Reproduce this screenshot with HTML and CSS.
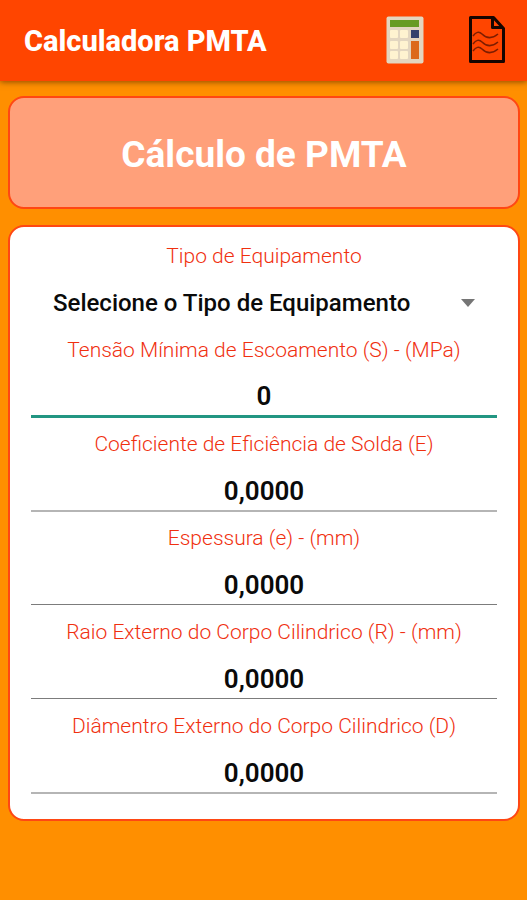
FILE: index.html
```html
<!DOCTYPE html>
<html lang="pt-BR">
<head>
<meta charset="utf-8">
<meta name="viewport" content="width=device-width, initial-scale=1">
<title>Calculadora PMTA</title>
<link rel="stylesheet" href="styles.css">
</head>
<body>
<header class="bar">
  <h1 class="bar-title">Calculadora PMTA</h1>
  <div class="actions">
    <button class="action" type="button" aria-label="Calcular">
      <svg width="38" height="48" viewBox="0 0 38 48">
        <rect x="0.5" y="0.5" width="37" height="47" rx="2" fill="#e3d6c0"/>
        <rect x="4" y="4" width="29" height="7" fill="#679b24"/>
        <g fill="#fff3d0">
          <rect x="4" y="14" width="8" height="8" rx="1"/><rect x="14" y="14" width="8" height="8" rx="1"/>
          <rect x="4" y="25" width="8" height="8" rx="1"/><rect x="14" y="25" width="8" height="8" rx="1"/>
          <rect x="4" y="35" width="8" height="8" rx="1"/><rect x="14" y="35" width="8" height="8" rx="1"/>
        </g>
        <rect x="25" y="14" width="8" height="8" fill="#34416c"/>
        <rect x="25" y="25" width="8" height="18" fill="#dc6a1c"/>
      </svg>
    </button>
    <button class="action" type="button" aria-label="Relatório">
      <svg width="38" height="48" viewBox="0 0 38 48" fill="none" stroke="#160500" stroke-linejoin="round">
        <path d="M2.5 1.5H25.5L35.5 12.5V45.500H2.500Z" stroke-width="3"/>
        <path d="M24.500 2V11.500H35" stroke-width="3"/>
        <path d="M5 20C8 16 11 15 14 18C19 23 24 23 30 18M5 28C8 24 11 23 14 26C19 31 24 31 30 26M5 35C8 31 11 30 14 33C19 38 24 38 30 33" stroke="#7d1d00" stroke-width="1.500"/>
      </svg>
    </button>
  </div>
</header>
<main class="content">
  <section class="card hero">
    <h2 class="hero-title">Cálculo de PMTA</h2>
  </section>
  <form class="card form">
    <div class="field">
      <label class="label" for="tipo">Tipo de Equipamento</label>
      <div class="picker">
        <select class="select" id="tipo"><option>Selecione o Tipo de Equipamento</option></select>
        <svg class="caret" width="14" height="8" viewBox="0 0 14 8"><path d="M0 0H14L7 8Z" fill="#757575"/></svg>
      </div>
    </div>
    <div class="field">
      <label class="label" for="tensao">Tensão Mínima de Escoamento (S) - (MPa)</label>
      <input class="input active" id="tensao" type="text" inputmode="decimal" value="0">
    </div>
    <div class="field">
      <label class="label" for="coef">Coeficiente de Eficiência de Solda (E)</label>
      <input class="input" id="coef" type="text" inputmode="decimal" value="0,0000">
    </div>
    <div class="field">
      <label class="label" for="espessura">Espessura (e) - (mm)</label>
      <input class="input thin" id="espessura" type="text" inputmode="decimal" value="0,0000">
    </div>
    <div class="field">
      <label class="label" for="raio">Raio Externo do Corpo Cilindrico (R) - (mm)</label>
      <input class="input thin" id="raio" type="text" inputmode="decimal" value="0,0000">
    </div>
    <div class="field">
      <label class="label" for="diametro">Diâmentro Externo do Corpo Cilindrico (D)</label>
      <input class="input" id="diametro" type="text" inputmode="decimal" value="0,0000">
    </div>
  </form>
</main>
</body>
</html>
```
FILE: styles.css
```css
* { box-sizing: border-box; }

body {
  margin: 0;
  min-height: 100vh;
  background: #ff8f00;
  font-family: Roboto, "Liberation Sans", sans-serif;
}

.bar {
  display: flex;
  align-items: center;
  justify-content: space-between;
  padding: 16px 21px 17px 24px;
  background: #ff4500;
  box-shadow: 0 1px 6px rgba(60, 30, 0, 0.6);
}

.bar-title {
  margin: 0;
  padding-top: 2px;
  color: #fff;
  font-size: 29px;
  line-height: 36px;
  font-weight: 800;
}

.actions {
  display: flex;
  gap: 44px;
}

.action {
  display: flex;
  padding: 0;
  border: 0;
  background: none;
}

.content {
  display: grid;
  gap: 16px;
  padding: 15px 7px 16px 8px;
}

.card {
  border: 2px solid #ff4713;
  border-radius: 16px;
}

.hero {
  padding: 33px 16px 29px;
  background: #ffa07a;
}

.hero-title {
  margin: 0;
  color: #fff;
  font-size: 37px;
  line-height: 47px;
  font-weight: 700;
  text-align: center;
}

.form {
  padding: 16px 21px 12px;
  background: #fff;
}

.field {
  display: flex;
  flex-direction: column;
  height: 94px;
}

.label {
  color: #f0300f;
  font-size: 21px;
  line-height: 26px;
  font-weight: 300;
  text-align: center;
}

.picker {
  display: grid;
  align-items: center;
}

.select {
  grid-area: 1 / 1;
  width: 100%;
  height: 68px;
  padding: 0 56px 0 22px;
  border: 0;
  background: none;
  appearance: none;
  color: #0a0a0a;
  font: 500 24px Roboto, "Liberation Sans", sans-serif;
}

.caret {
  grid-area: 1 / 1;
  justify-self: end;
  margin-right: 22px;
  pointer-events: none;
}

.input {
  width: 100%;
  height: 55px;
  padding: 14px 0 0;
  border: 0;
  border-bottom: 2px solid #b5b5b5;
  background: none;
  outline: none;
  color: #0a0a0a;
  font: 600 26px Roboto, "Liberation Sans", sans-serif;
  text-align: center;
}

.thin {
  height: 54px;
  border-bottom: 1px solid #7c7c7c;
}

.active {
  border-bottom: 3px solid #229682;
}
```
